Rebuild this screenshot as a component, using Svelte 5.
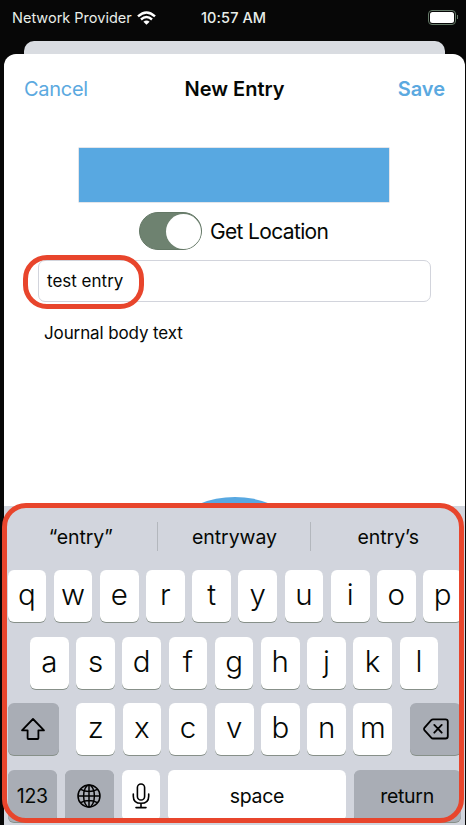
<script>
  const suggestions = ['“entry”', 'entryway', 'entry’s'];
  const top = [...'qwertyuiop'];
  const home = [...'asdfghjkl'];
  const bottom = [...'zxcvbnm'];
</script>

<main class="phone">
  <header class="status">
    <span class="carrier">Network Provider</span>
    <svg class="wifi" width="19" height="14" viewBox="0 0 19 14" fill="none" stroke="#fff" stroke-width="2.4">
      <path d="M1 5.4Q9.5-2.6 18 5.4M4 8.5Q9.5 3.5 15 8.5" />
      <path d="M6.4 10.8Q9.5 8.2 12.6 10.8L9.5 13.8Z" fill="#fff" stroke="none" />
    </svg>
    <span class="clock">10:57 AM</span>
    <div class="battery"><i></i></div>
  </header>
  <div class="behind"></div>
  <section class="sheet">
    <nav>
      <span class="cancel">Cancel</span>
      <strong class="title">New Entry</strong>
      <strong class="save">Save</strong>
    </nav>
    <div class="banner"></div>
    <div class="location">
      <div class="switch"><i></i></div>
      <span>Get Location</span>
    </div>
    <div class="field"><span>test entry</span><div class="mark"></div></div>
    <div class="body">Journal body text</div>
    <div class="photo"></div>
    <div class="keyboard">
      <div class="suggestions">
        {#each suggestions as s}<span>{s}</span>{/each}
      </div>
      <div class="row">
        {#each top as k}<b class="key">{k}</b>{/each}
      </div>
      <div class="row home">
        {#each home as k}<b class="key">{k}</b>{/each}
      </div>
      <div class="row third">
        <b class="key dark shift">
          <svg width="26" height="24" viewBox="0 0 26 24" fill="none" stroke="#000" stroke-width="1.8" stroke-linejoin="round"><path d="M13 2L24 13.3H18.4V21.2Q18.4 22 17.6 22H8.4Q7.6 22 7.6 21.2V13.3H2Z" /></svg>
        </b>
        <div class="letters">{#each bottom as k}<b class="key">{k}</b>{/each}</div>
        <b class="key dark del">
          <svg width="26" height="22" viewBox="0 0 26 22" fill="none" stroke="#000" stroke-width="1.8" stroke-linejoin="round" stroke-linecap="round"><path d="M10 1.3H22.5Q24.8 1.3 24.8 3.6V18.2Q24.8 20.5 22.5 20.5H10Q9 20.5 8.2 19.6L1.6 12.3Q.5 11 1.6 9.7L8.2 2.2Q9 1.3 10 1.3ZM11.3 6.9L18.7 14.7M18.7 6.9L11.3 14.7" /></svg>
        </b>
      </div>
      <div class="row fourth">
        <b class="key dark num">123</b>
        <b class="key dark globe">
          <svg width="24" height="24" viewBox="0 0 24 24" fill="none" stroke="#000" stroke-width="1.5"><circle cx="12" cy="12" r="11" /><ellipse cx="12" cy="12" rx="5.4" ry="11" /><path d="M12 1V23M1 12H23M3.6 5.4Q12 9.6 20.4 5.4M3.6 18.6Q12 14.4 20.4 18.6" /></svg>
        </b>
        <b class="key mic">
          <svg width="18" height="26" viewBox="0 0 18 26" fill="none" stroke="#000" stroke-width="1.6" stroke-linecap="round"><rect x="5.4" y="1" width="7.2" height="16" rx="3.6" /><path d="M1.3 11V13.2Q1.3 20.3 9 20.3T16.7 13.2V11M9 20.3V24.6M4 24.6H14" /></svg>
        </b>
        <b class="key space">space</b>
        <b class="key dark return">return</b>
      </div>
      <div class="outline"></div>
    </div>
  </section>
</main>

<style>
  :global(body) { margin: 0; background: #070707; }
  .phone {
    width: 466px; height: 825px; overflow: hidden; box-sizing: border-box;
    display: flex; flex-direction: column; background: #070707;
    font-family: Inter, "Liberation Sans", sans-serif; color: #050805; white-space: nowrap;
  }
  .status { height: 41px; flex: none; display: flex; align-items: center; color: #e9eee9; font-size: 14.5px; padding: 0 8px 6px 12px; box-sizing: border-box; }
  .carrier { width: 125px; letter-spacing: 0; }
  .wifi { width: 19px; margin-right: 45px; }
  .clock { flex: 1; letter-spacing: .1px; font-weight: 500; }
  .battery { width: 24px; height: 11px; border: 1px solid #657a68; border-radius: 4px; padding: 1px; position: relative; margin-right: 2px; margin-top: -1px; }
  .battery i { display: block; height: 11px; border-radius: 2.5px; background: #fff; }
  .battery::after { content: ''; position: absolute; right: -3px; top: 4px; width: 1px; height: 4px; background: #657a68; }
  .behind { height: 25px; flex: none; margin: 0 21px 0 24px; border-radius: 10px 10px 0 0; background: #d9dce1; }
  .sheet { flex: none; height: 771px; margin: -12px 1px 0 4px; border-radius: 12px 12px 0 0; background: #fff; position: relative; display: flex; flex-direction: column; }
  nav { height: 94px; padding: 22px 20px 0; display: grid; grid-template-columns: 1fr auto 1fr; align-items: start; box-sizing: border-box; line-height: 26px; font-size: 20px; }
  strong { font-weight: 600; }
  .cancel, .save { color: #5ba9e0; }
  .cancel { letter-spacing: -.3px; }
  .save { text-align: right; }
  .banner { width: 310px; height: 54px; margin-left: 75px; background: #58a8e1; box-shadow: 0 0 0 .5px #c7ccd6; }
  .location { display: flex; align-items: center; gap: 8px; height: 38px; margin: 10px 0 0 135px; font-size: 21px; letter-spacing: -.65px; }
  .switch { width: 63px; height: 38px; border-radius: 19px; box-sizing: border-box; background: #6e8270; display: flex; justify-content: flex-end; border: 1px solid #647866; padding: .5px; }
  .switch i { width: 35px; height: 35px; border-radius: 50%; background: #fff; }
  .field { box-sizing: border-box; width: 393px; height: 42px; margin: 10px 0 0 34px; border: 1px solid #d2d4dc; border-radius: 7px; line-height: 41px; padding-left: 8px; font-size: 17px; position: relative; }
  .mark { position: absolute; left: -16px; top: -6px; width: 121px; height: 54px; border: 5.5px solid #e8452c; border-radius: 24px; box-sizing: border-box; }
  .body { margin: 20px 0 0 40px; height: 22px; line-height: 22px; font-size: 17px; letter-spacing: -.12px; }
  .photo { flex: none; width: 194px; height: 194px; border-radius: 50%; background: #58a8e1; margin: 153px auto 0; }
  .keyboard { position: absolute; left: 0; right: 0; bottom: 0; height: 319px; background: #d2d5dd; }
  .outline { position: absolute; left: -2px; top: -3px; width: 462px; height: 320px; box-sizing: border-box; border: 5.5px solid #e8452c; border-radius: 24px; }
  .suggestions { height: 64px; display: flex; }
  .suggestions span { flex: 1; text-align: center; font-size: 19.5px; letter-spacing: -.05px; line-height: 62px; position: relative; }
  .suggestions span + span::before { content: ''; position: absolute; left: -1px; top: 16px; height: 29px; width: 1px; background: #b3b7bd; }
  .row, .letters { display: flex; gap: 7.5px; }
  .row { height: 52px; margin: 0 3.5px 14.6px; }
  .key { flex: none; box-sizing: border-box; width: 38.7px; height: 52px; border-radius: 6px; background: #fff; box-shadow: 0 1px 0 #879089; font-weight: 350; font-size: 29.5px; line-height: 48px; text-align: center; }
  .home { margin-left: 26px; }
  .dark { background: #a9adb5; }
  .key svg { display: block; margin: auto; }
  .third { gap: 0; justify-content: space-between; margin-right: 4px; }
  .shift, .del { width: 51px; display: flex; align-items: center; }
  .fourth { gap: 7.6px; }
  .num, .globe { width: 49.5px; }
  .globe, .mic { display: flex; align-items: center; }
  .num, .space, .return { font-size: 19.5px; font-weight: 400; line-height: 52px; letter-spacing: -.3px; }
  .space { width: 178px; }
  .return { width: 107px; }
</style>
